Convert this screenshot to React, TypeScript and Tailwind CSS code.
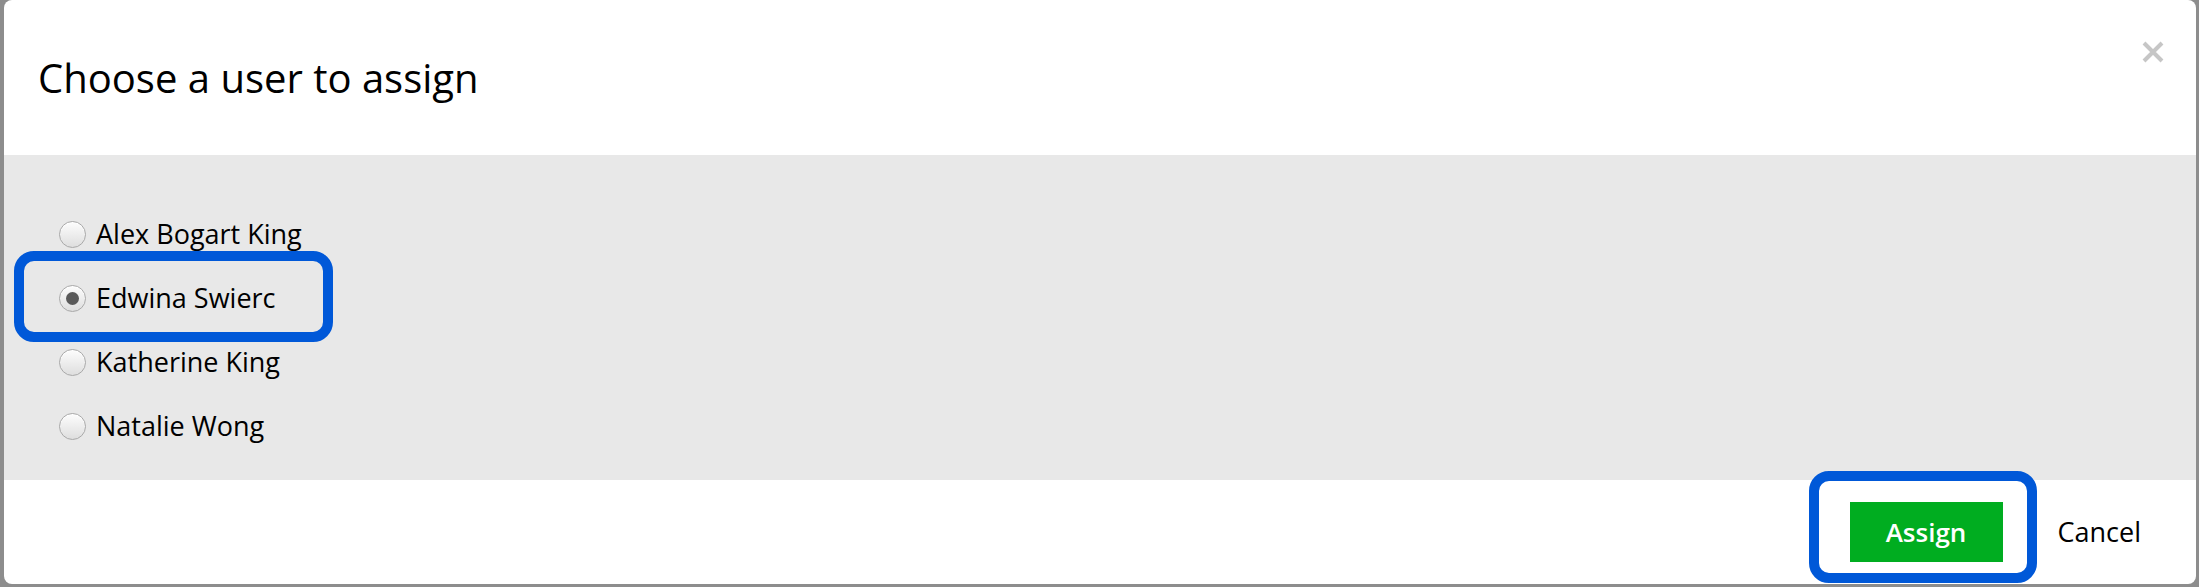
const users = ["Alex Bogart King", "Edwina Swierc", "Katherine King", "Natalie Wong"];

function Radio({ checked }: { checked: boolean }) {
  return (
    <span className="flex h-[27px] w-[27px] shrink-0 items-center justify-center rounded-full border border-[#a9a9a9] bg-gradient-to-b from-[#fdfdfd] to-[#dedede] shadow-[inset_0_1px_1px_rgba(255,255,255,0.9)]">
      {checked && <span className="h-[13px] w-[13px] rounded-full bg-[#5a5a5a]" />}
    </span>
  );
}

export default function App() {
  const selected = "Edwina Swierc";
  const font = { fontFamily: '"Open Sans", "Noto Sans", sans-serif' };

  return (
    <div className="h-[587px] w-[2199px] overflow-hidden bg-[#8d8d8d] pl-[4px]" style={font}>
      <div className="flex h-[584px] w-[2192px] flex-col overflow-hidden rounded-[8px] bg-white">
        {/* Header */}
        <div className="relative flex h-[155px] shrink-0 items-center pl-[34px]">
          <h1 className="text-[40px] font-normal leading-none text-black">Choose a user to assign</h1>
          <button className="absolute right-[32px] top-[41px] text-[#c6c6c6]" aria-label="Close">
            <svg width="22" height="22" viewBox="0 0 22 22">
              <path d="M2 2 L20 20 M20 2 L2 20" stroke="currentColor" strokeWidth="4" />
            </svg>
          </button>
        </div>

        {/* Body — grey band with the user list */}
        <div className="h-[325px] shrink-0 bg-[#e8e8e8] pt-[47px]">
          {users.map((u) => (
            <label key={u} className="relative flex h-[64px] items-center gap-[10px] pl-[55px] text-[27px] text-black">
              <Radio checked={u === selected} />
              <span>{u}</span>
              {u === selected && (
                <span className="pointer-events-none absolute left-[10px] top-[-15px] h-[91px] w-[319px] rounded-[20px] border-[10px] border-[#0058d8]" />
              )}
            </label>
          ))}
        </div>

        {/* Footer */}
        <div className="flex flex-1 items-center justify-end gap-[55px] pr-[55px]">
          <div className="relative">
            <button className="h-[60px] w-[153px] bg-[#00ad20] text-[26px] font-semibold text-white">
              Assign
            </button>
            <span className="pointer-events-none absolute left-[-41px] top-[-31px] h-[112px] w-[228px] rounded-[20px] border-[10px] border-[#0058d8]" />
          </div>
          <button className="text-[27px] text-black">Cancel</button>
        </div>
      </div>
    </div>
  );
}
